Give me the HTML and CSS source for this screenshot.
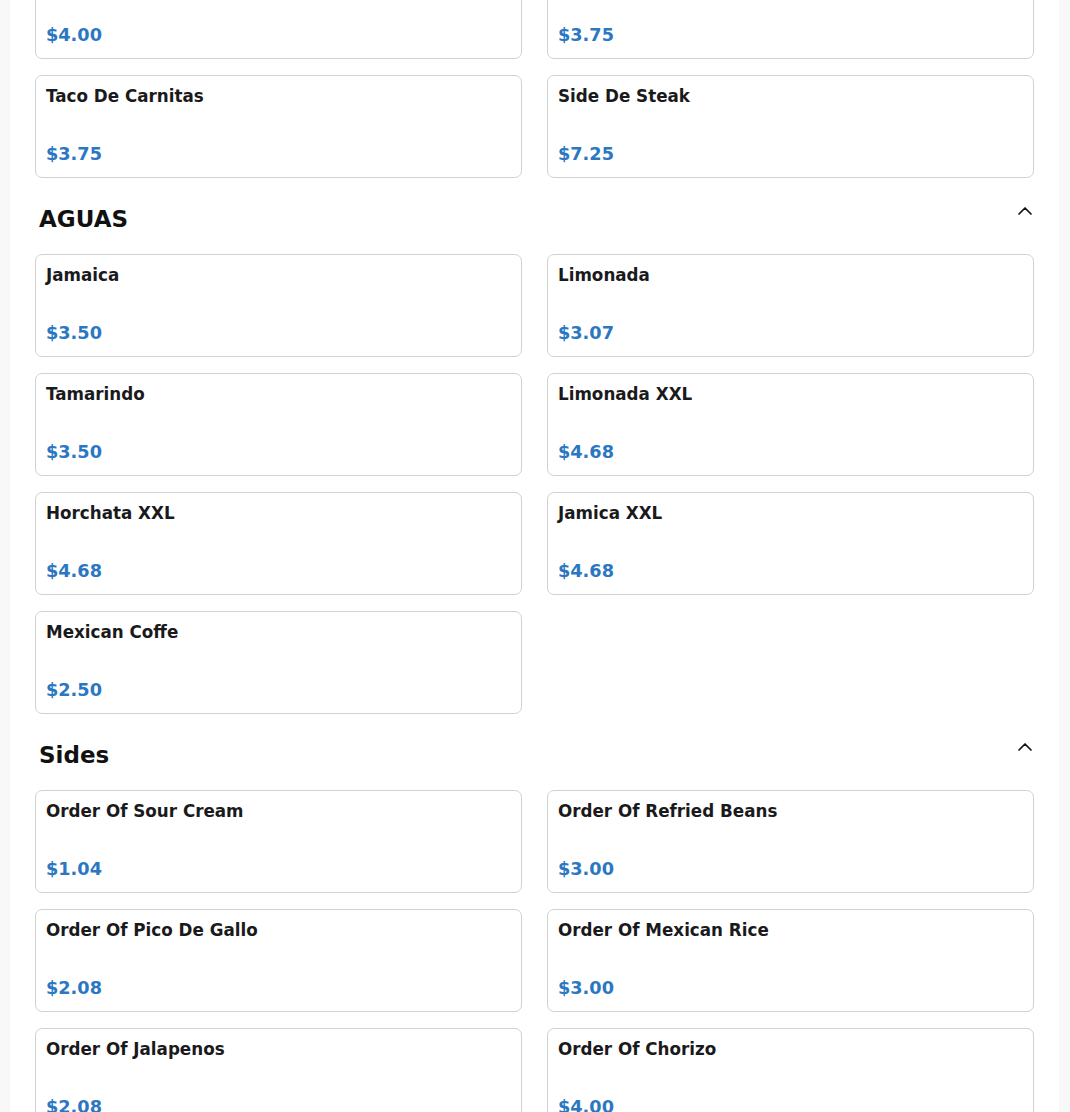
FILE: index.html
```html
<!DOCTYPE html>
<html lang="en">
<head>
<meta charset="utf-8">
<title>Menu</title>
<link rel="stylesheet" href="styles.css">
</head>
<body>
<main class="panel">
  <section class="section section-first">
    <div class="grid">
      <div class="card"><div class="name">Taco De Asada</div><div class="price">$4.00</div></div>
      <div class="card"><div class="name">Taco De Pollo</div><div class="price">$3.75</div></div>
      <div class="card"><div class="name">Taco De Carnitas</div><div class="price">$3.75</div></div>
      <div class="card"><div class="name">Side De Steak</div><div class="price">$7.25</div></div>
    </div>
  </section>

  <section class="section">
    <div class="section-head">
      <h2 class="section-title">AGUAS</h2>
      <svg class="chev" width="14" height="8" viewBox="0 0 14 8"><polyline points="1,7 7,1 13,7" fill="none" stroke="#111" stroke-width="1.7" stroke-linecap="round" stroke-linejoin="round"/></svg>
    </div>
    <div class="grid">
      <div class="card"><div class="name">Jamaica</div><div class="price">$3.50</div></div>
      <div class="card"><div class="name">Limonada</div><div class="price">$3.07</div></div>
      <div class="card"><div class="name">Tamarindo</div><div class="price">$3.50</div></div>
      <div class="card"><div class="name">Limonada XXL</div><div class="price">$4.68</div></div>
      <div class="card"><div class="name">Horchata XXL</div><div class="price">$4.68</div></div>
      <div class="card"><div class="name">Jamica XXL</div><div class="price">$4.68</div></div>
      <div class="card"><div class="name">Mexican Coffe</div><div class="price">$2.50</div></div>
    </div>
  </section>

  <section class="section">
    <div class="section-head">
      <h2 class="section-title">Sides</h2>
      <svg class="chev" width="14" height="8" viewBox="0 0 14 8"><polyline points="1,7 7,1 13,7" fill="none" stroke="#111" stroke-width="1.7" stroke-linecap="round" stroke-linejoin="round"/></svg>
    </div>
    <div class="grid">
      <div class="card"><div class="name">Order Of Sour Cream</div><div class="price">$1.04</div></div>
      <div class="card"><div class="name">Order Of Refried Beans</div><div class="price">$3.00</div></div>
      <div class="card"><div class="name">Order Of Pico De Gallo</div><div class="price">$2.08</div></div>
      <div class="card"><div class="name">Order Of Mexican Rice</div><div class="price">$3.00</div></div>
      <div class="card"><div class="name">Order Of Jalapenos</div><div class="price">$2.08</div></div>
      <div class="card"><div class="name">Order Of Chorizo</div><div class="price">$4.00</div></div>
    </div>
  </section>
</main>
</body>
</html>
```

FILE: styles.css
```css
html, body {
  margin: 0;
  padding: 0;
  background: #f8f8f8;
  font-family: "DejaVu Sans", "Liberation Sans", sans-serif;
  color: #1c1c1e;
}

.panel {
  background: #ffffff;
  margin: 0 11px 0 10px;
  padding: 0 25px 24px 25px;
  overflow: hidden;
}

.section-first {
  margin-top: -44px;
}

.section-head {
  display: flex;
  justify-content: space-between;
  align-items: flex-start;
  margin: 28px 0 22px 0;
  padding-left: 4px;
}

.section-title {
  margin: 0;
  font-size: 23px;
  font-weight: bold;
  line-height: normal;
  color: #111111;
}

.chev {
  margin-top: 1px;
  margin-right: 2px;
  display: block;
}

.grid {
  display: grid;
  grid-template-columns: 1fr 1fr;
  column-gap: 25px;
  row-gap: 16px;
}

.card {
  box-sizing: border-box;
  height: 103px;
  border: 1px solid #d2d2d2;
  border-radius: 7px;
  padding: 10px 10px 13px 10px;
  display: flex;
  flex-direction: column;
  justify-content: space-between;
}

.name {
  font-size: 16.75px;
  font-weight: bold;
  color: #1a1a1c;
}

.price {
  font-size: 17.7px;
  font-weight: bold;
  color: #2b77c2;
}
```
